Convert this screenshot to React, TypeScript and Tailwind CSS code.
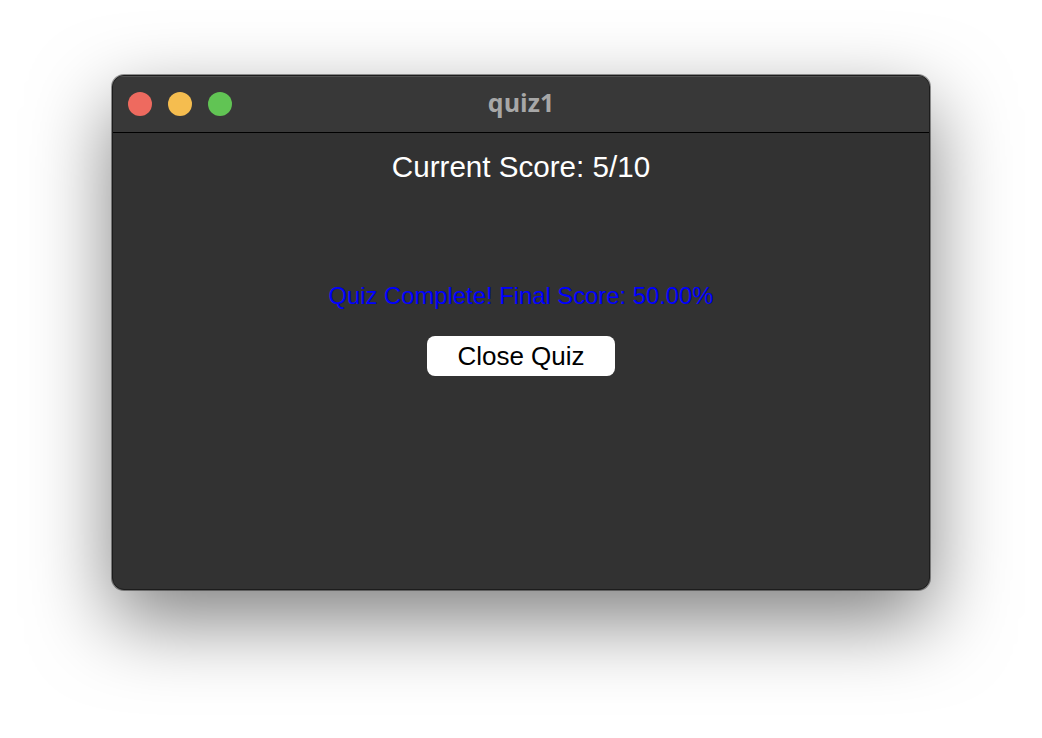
import React from "react";

export default function App() {
  return (
    <div className="w-[1042px] h-[738px] bg-white pt-[75px] overflow-hidden" style={{ fontFamily: '"Liberation Sans", Arial, sans-serif' }}>
      <div className="mx-auto w-[818px] h-[515px] rounded-[12px] bg-[#323232] border border-[#1c1c1c] shadow-[0_30px_80px_rgba(0,0,0,0.5),0_0_0_1px_rgba(90,90,90,0.6)] overflow-hidden flex flex-col">
        <div className="h-[57px] shrink-0 bg-[#383838] border-b border-black relative flex items-center justify-center shadow-[inset_0_1px_0_rgba(255,255,255,0.12)]">
          <div className="absolute left-[15px] top-[16px] flex gap-[16px]">
            <div className="w-[24px] h-[24px] rounded-full bg-[#ee6a5f]" />
            <div className="w-[24px] h-[24px] rounded-full bg-[#f5bd4f]" />
            <div className="w-[24px] h-[24px] rounded-full bg-[#61c454]" />
          </div>
          <span className="text-[25px] leading-[30px] mb-[4px] font-bold text-[#a7a7a7]" style={{ fontFamily: '"Open Sans", "Noto Sans", sans-serif' }}>quiz1</span>
        </div>
        <div className="flex-1 flex flex-col items-center pt-[17px]">
          <div className="text-[29.6px] leading-[34px] text-white">Current Score: 5/10</div>
          <div className="mt-[98px] text-[23.8px] leading-[28px] text-[#0000ff]">Quiz Complete! Final Score: 50.00%</div>
          <button className="mt-[26px] w-[188px] h-[40px] rounded-[8px] bg-white text-black text-[26px] flex items-center justify-center">Close Quiz</button>
        </div>
      </div>
    </div>
  );
}
